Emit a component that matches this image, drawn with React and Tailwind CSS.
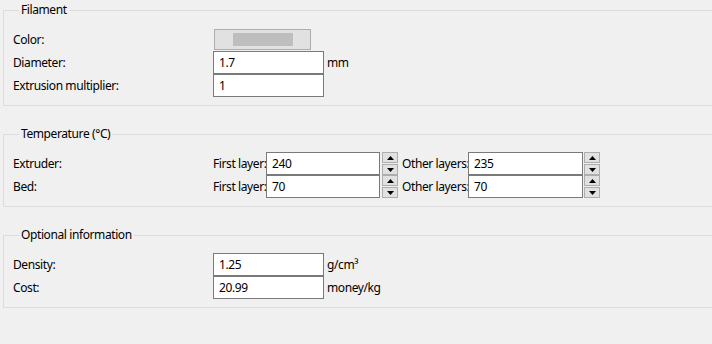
import React from 'react';

function Spinner() {
  return (
    <div className="flex flex-col gap-px w-[16px] h-[23px]">
      <div className="flex-1 flex items-center justify-center bg-[#e1e1e1] border border-[#adadad]">
        <svg width="7" height="4" viewBox="0 0 7 4"><path d="M3.5 0L7 4H0z" fill="#000" /></svg>
      </div>
      <div className="flex-1 flex items-center justify-center bg-[#e1e1e1] border border-[#adadad]">
        <svg width="7" height="4" viewBox="0 0 7 4"><path d="M0 0h7L3.5 4z" fill="#000" /></svg>
      </div>
    </div>
  );
}

function Field({ value, width = 'w-[111px]' }) {
  return (
    <div className={`${width} h-[23px] flex items-center pl-[5px] bg-white border border-[#7a7a7a] text-black`}>
      {value}
    </div>
  );
}

function Group({ title, children, className = '' }) {
  return (
    <fieldset className={`w-[740px] ml-[3px] border border-[#dcdcdc] pl-[9px] pt-[10px] pb-[8px] ${className}`}>
      <legend className="ml-[6px] px-[2px] leading-[16px]">{title}</legend>
      <div className="flex flex-col">{children}</div>
    </fieldset>
  );
}

function Row({ label, children }) {
  return (
    <div className="flex items-center h-[23px]">
      <span className="w-[200px]">{label}</span>
      {children}
    </div>
  );
}

export default function App() {
  return (
    <div
      className="w-[712px] h-[344px] overflow-hidden bg-[#f0f0f0] text-[12px] tracking-[-0.4px] text-black pt-[2px]"
      style={{ fontFamily: '"Noto Sans", "Liberation Sans", sans-serif' }}
    >
      <Group title="Filament">
        <Row label="Color:">
          <div className="ml-px w-[97px] h-[21px] flex items-center justify-center bg-[#e1e1e1] border border-[#adadad]">
            <div className="w-[60px] h-[13px] bg-[#bebebe]" />
          </div>
        </Row>
        <Row label="Diameter:">
          <Field value="1.7" />
          <span className="ml-[3px]">mm</span>
        </Row>
        <Row label="Extrusion multiplier:">
          <Field value="1" />
        </Row>
      </Group>

      <Group title="Temperature (°C)" className="mt-[20px]">
        {[['Extruder:', '240', '235'], ['Bed:', '70', '70']].map(([label, first, other]) => (
          <Row key={label} label={label}>
            <span className="w-[53px] whitespace-nowrap">First layer:</span>
            <Field value={first} width="w-[114px]" />
            <div className="ml-[2px]"><Spinner /></div>
            <span className="ml-[4px] w-[66px] whitespace-nowrap">Other layers:</span>
            <Field value={other} width="w-[115px]" />
            <div className="ml-[1px]"><Spinner /></div>
          </Row>
        ))}
      </Group>

      <Group title="Optional information" className="mt-[20px]">
        <Row label="Density:">
          <Field value="1.25" />
          <span className="ml-[3px]">g/cm³</span>
        </Row>
        <Row label="Cost:">
          <Field value="20.99" />
          <span className="ml-[3px]">money/kg</span>
        </Row>
      </Group>
    </div>
  );
}
